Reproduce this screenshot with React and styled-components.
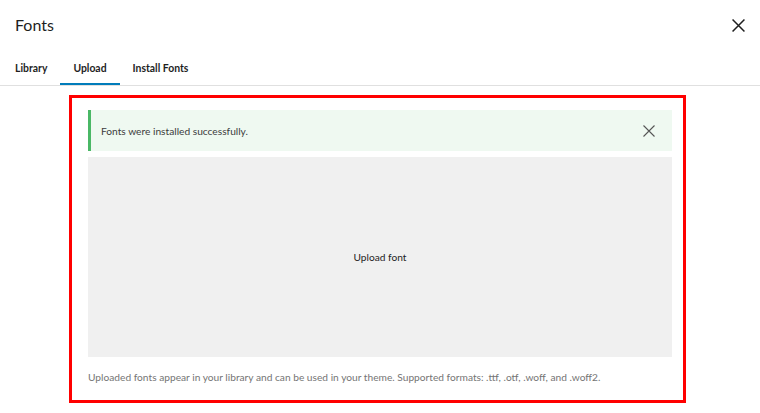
import React, { useState } from "react"
import styled, { createGlobalStyle } from "styled-components"

const GlobalStyle = createGlobalStyle`
  body {
    margin: 0;
    background: #fff;
    font-family: Lato, "Open Sans", sans-serif;
    color: #1e1e1e;
  }
`

const Modal = styled.div`
  width: 760px;
  height: 413px;
  background: #fff;
  overflow: hidden;
`

const Header = styled.div`
  height: 50px;
  display: flex;
  align-items: center;
  justify-content: space-between;
  padding: 0 15px;
`

const Title = styled.h1`
  margin: 0;
  font-size: 16px;
  font-weight: 400;
  line-height: 1;
`

const CloseButton = styled.button`
  border: 0;
  background: none;
  padding: 0;
  display: flex;
  color: #1e1e1e;
  cursor: pointer;
`

const TabList = styled.div`
  display: flex;
  padding-left: 2px;
  border-bottom: 1px solid #e0e0e0;
`

const Tab = styled.button`
  border: 0;
  background: none;
  font-family: inherit;
  font-size: 10.4px;
  font-weight: 700;
  color: #1e1e1e;
  height: 35px;
  padding: 0 13px;
  box-shadow: ${p => (p.$active ? "inset 0 -2px 0 #007cba" : "none")};
  cursor: pointer;
`

const Frame = styled.div`
  box-sizing: border-box;
  width: 617px;
  height: 308px;
  margin: 9px 0 0 69px;
  border: 3px solid #ff0000;
  padding: 12px 11px 0 16px;
`

const Notice = styled.div`
  height: 41px;
  display: flex;
  align-items: center;
  justify-content: space-between;
  background: #eff9f1;
  border-left: 3px solid #4ab866;
  padding: 0 17px 0 10px;
  font-size: 10.2px;
  color: #3c3c3c;
`

const Dismiss = styled.button`
  border: 0;
  background: none;
  padding: 0;
  display: flex;
  color: #555;
  cursor: pointer;
`

const DropZone = styled.div`
  margin-top: 6px;
  height: 200px;
  background: #f0f0f0;
  display: flex;
  align-items: center;
  justify-content: center;
  font-size: 10.2px;
  color: #1e1e1e;
`

const Help = styled.p`
  margin: 12px 0 0;
  font-size: 10.2px;
  line-height: 16px;
  color: #757575;
`

const Cross = ({ size, width }) => (
  <svg width={size} height={size} viewBox="0 0 12 12" fill="none" stroke="currentColor" strokeWidth={width}>
    <path d="M0.5 0.5 L11.5 11.5 M11.5 0.5 L0.5 11.5" />
  </svg>
)

const tabs = ["Library", "Upload", "Install Fonts"]

export default function App() {
  const [active, setActive] = useState("Upload")
  const [shown, setShown] = useState(true)

  return (
    <Modal>
      <GlobalStyle />
      <Header>
        <Title>Fonts</Title>
        <CloseButton aria-label="Close">
          <Cross size={13} width={1.4} />
        </CloseButton>
      </Header>
      <TabList>
        {tabs.map(t => (
          <Tab key={t} $active={t === active} onClick={() => setActive(t)}>
            {t}
          </Tab>
        ))}
      </TabList>
      <Frame>
        {shown && (
          <Notice>
            Fonts were installed successfully.
            <Dismiss aria-label="Dismiss" onClick={() => setShown(false)}>
              <Cross size={12} width={1.1} />
            </Dismiss>
          </Notice>
        )}
        <DropZone>Upload font</DropZone>
        <Help>
          Uploaded fonts appear in your library and can be used in your theme. Supported formats: .ttf, .otf, .woff, and .woff2.
        </Help>
      </Frame>
    </Modal>
  )
}
